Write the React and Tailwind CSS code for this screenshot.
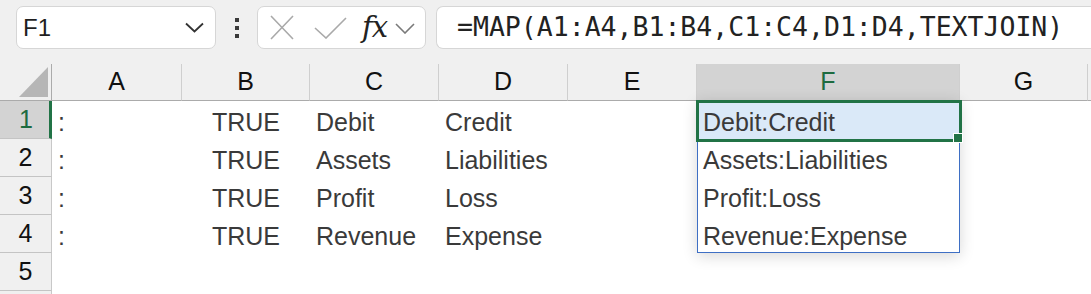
import React from 'react';

const COLS = ['A', 'B', 'C', 'D', 'E', 'F', 'G', ''];

const ROWS = [
  { a: ':', b: 'TRUE', c: 'Debit', d: 'Credit', f: 'Debit:Credit' },
  { a: ':', b: 'TRUE', c: 'Assets', d: 'Liabilities', f: 'Assets:Liabilities' },
  { a: ':', b: 'TRUE', c: 'Profit', d: 'Loss', f: 'Profit:Loss' },
  { a: ':', b: 'TRUE', c: 'Revenue', d: 'Expense', f: 'Revenue:Expense' },
  { a: '', b: '', c: '', d: '', f: '' },
  { a: '', b: '', c: '', d: '', f: '' },
];

const sans = "font-['Liberation_Sans',Arial,sans-serif]";

function Toolbar() {
  return (
    <div className="flex h-[64px] items-start bg-[#f0f0f0] pt-[6px]">
      <div className="ml-[16px] flex h-[43px] w-[200px] items-center justify-between rounded-[7px] border border-[#d6d6d6] bg-white pl-[6px] pr-[11px]">
        <span className={`${sans} text-[24px] text-[#1f1f1f]`}>F1</span>
        <svg width="19" height="11" viewBox="0 0 19 11" fill="none">
          <path d="M1 1.5 L9.5 9.5 L18 1.5" stroke="#333" strokeWidth="1.8" />
        </svg>
      </div>
      <div className="flex w-[41px] flex-col items-center gap-[4px] pt-[12px]">
        <span className="block h-[4px] w-[4px] bg-[#3a3a3a]" />
        <span className="block h-[4px] w-[4px] bg-[#3a3a3a]" />
        <span className="block h-[4px] w-[4px] bg-[#3a3a3a]" />
      </div>
      <div className="flex h-[43px] w-[169px] items-center rounded-[7px] border border-[#d6d6d6] bg-white pl-[12px]">
        <svg width="24" height="25" viewBox="0 0 24 25" fill="none">
          <path d="M1 1 L23 24 M23 1 L1 24" stroke="#a9a9a9" strokeWidth="1.6" />
        </svg>
        <svg className="ml-[20px]" width="33" height="22" viewBox="0 0 33 22" fill="none">
          <path d="M1 11 L12 21 L32 1" stroke="#a9a9a9" strokeWidth="1.6" />
        </svg>
        <span className="ml-[15px] font-['DejaVu_Serif',serif] text-[29px] italic leading-none tracking-[-1px] text-[#222]">fx</span>
        <svg className="ml-[8px] mt-[2px]" width="20" height="11" viewBox="0 0 20 11" fill="none">
          <path d="M1 1 L10 10 L19 1" stroke="#7a7a7a" strokeWidth="1.6" />
        </svg>
      </div>
      <div className="ml-[10px] flex h-[43px] flex-1 items-center rounded-l-[7px] border border-r-0 border-[#d6d6d6] bg-white pl-[20px]">
        <span className="font-['DejaVu_Sans_Mono',monospace] text-[26.5px] leading-none text-[#222]">
          =MAP(A1:A4,B1:B4,C1:C4,D1:D4,TEXTJOIN)
        </span>
      </div>
    </div>
  );
}

export default function App() {
  return (
    <div className={`h-[294px] w-[1091px] overflow-hidden bg-white ${sans}`}>
      <Toolbar />
      <div className="relative">
        <div className="grid grid-cols-[52px_130px_128px_129px_129px_129px_263px_128px_100px] grid-rows-[37px_repeat(6,38px)]">
          {/* corner */}
          <div className="flex items-end justify-end border-b border-r border-[#ababab] bg-[#f0f0f0] pb-[3px] pr-[3px]">
            <svg width="29" height="30" viewBox="0 0 29 30">
              <path d="M29 0 L29 30 L0 30 Z" fill="#b6b6b6" />
            </svg>
          </div>
          {COLS.map((c, ci) => (
            <div
              key={ci}
              className={`flex items-center justify-center border-b border-r border-b-[#ababab] border-r-[#cfcfcf] text-[25px] ${
                c === 'F' ? 'bg-[#d3d3d3] text-[#1d6b40]' : 'bg-[#f0f0f0] text-[#111]'
              }`}
            >
              {c}
            </div>
          ))}

          {ROWS.map((r, i) => (
            <React.Fragment key={i}>
              <div
                className={`flex items-center justify-center border-b border-[#c4c4c4] text-[25px] ${
                  i === 0
                    ? 'border-r-[3px] border-r-[#217346] bg-[#d3d3d3] pl-[3px] text-[#1d6b40]'
                    : 'border-r border-r-[#c8c8c8] bg-[#f0f0f0] text-[#111]'
                }`}
              >
                {i < 5 ? i + 1 : ''}
              </div>
              <div className="pl-[6px] pt-[4px] text-[25px] leading-[34px] text-[#3a3a3a]">{r.a}</div>
              <div className="pt-[4px] text-center text-[25px] leading-[34px] text-[#3a3a3a]">{r.b}</div>
              <div className="pl-[6px] pt-[4px] text-[25px] leading-[34px] text-[#3a3a3a]">{r.c}</div>
              <div className="pl-[6px] pt-[4px] text-[25px] leading-[34px] text-[#3a3a3a]">{r.d}</div>
              <div />
              <div
                className={`whitespace-nowrap pl-[6px] pt-[4px] text-[25px] leading-[34px] text-[#3a3a3a] ${
                  i === 0 ? 'bg-[#dae9f8]' : ''
                }`}
              >
                {r.f}
              </div>
              <div />
              <div />
            </React.Fragment>
          ))}
        </div>

        {/* spill range */}
        <div className="pointer-events-none absolute left-[697px] top-[36px] h-[153px] w-[263px] border border-[#3e6fc4] shadow-[0_3px_14px_rgba(0,0,0,0.16)]" />
        {/* active cell */}
        <div className="pointer-events-none absolute left-[696px] top-[36px] h-[42px] w-[266px] border-[3px] border-[#217346]" />
        <div className="pointer-events-none absolute left-[953px] top-[69px] h-[10px] w-[10px] border border-white bg-[#217346]" />
      </div>
    </div>
  );
}
